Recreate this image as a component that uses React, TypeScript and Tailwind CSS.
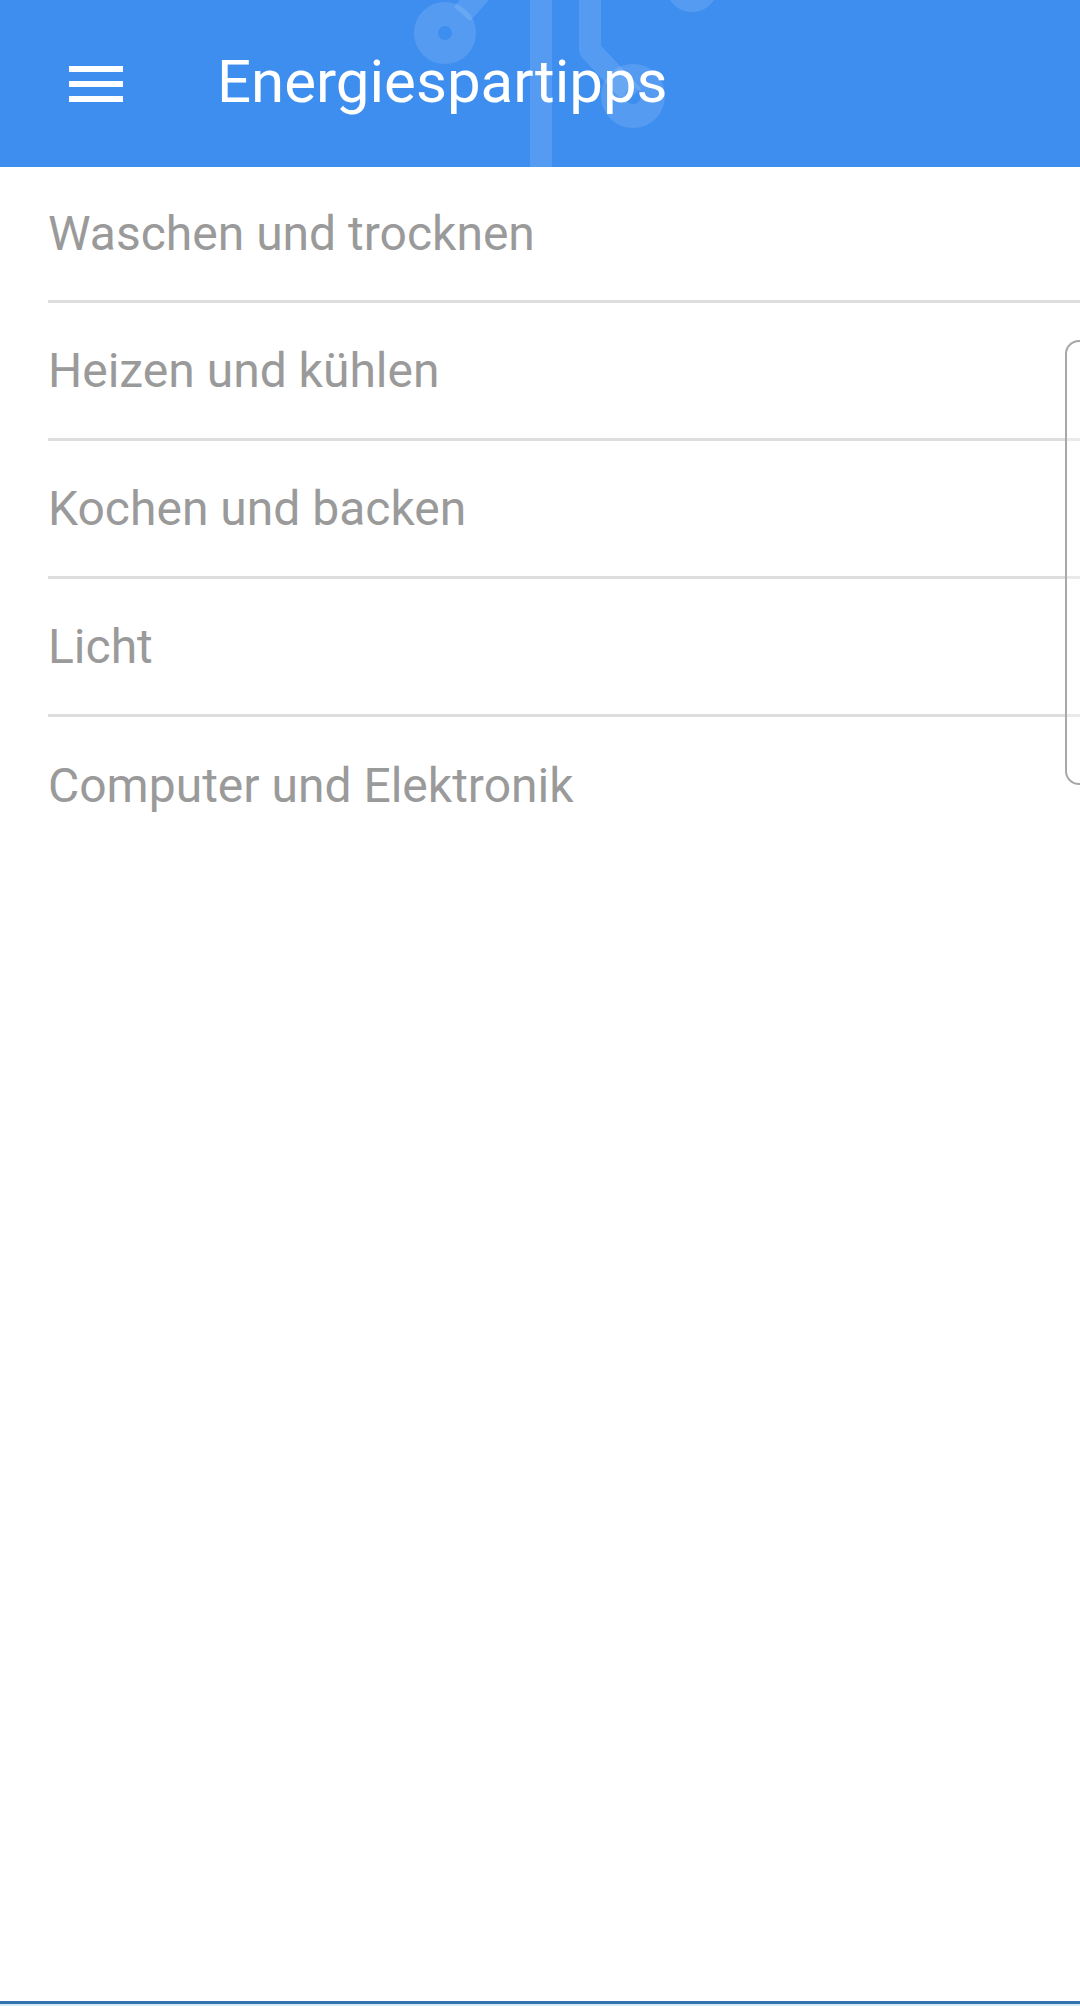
import React from "react";

const items = [
  "Waschen und trocknen",
  "Heizen und kühlen",
  "Kochen und backen",
  "Licht",
  "Computer und Elektronik",
];

export default function App() {
  return (
    <div
      className="relative w-[1080px] h-[2006px] bg-white overflow-hidden flex flex-col"
      style={{ fontFamily: "Roboto, 'Noto Sans', sans-serif" }}
    >
      <header className="relative h-[167px] shrink-0 bg-[#3d8eef] flex items-center overflow-hidden">
        <svg
          className="absolute inset-0"
          width="1080"
          height="167"
          viewBox="0 0 1080 167"
          fill="none"
        >
          <g stroke="#ffffff" strokeOpacity="0.12">
            <line x1="541" y1="0" x2="541" y2="167" strokeWidth="22" />
            <circle cx="445" cy="33" r="19" strokeWidth="24" />
            <line x1="462" y1="14" x2="492" y2="-20" strokeWidth="22" />
            <path d="M590 -10 L590 50 L633 96" strokeWidth="22" strokeLinejoin="round" />
            <circle cx="633" cy="96" r="20" strokeWidth="24" />
            <circle cx="692" cy="-14" r="16" strokeWidth="20" />
          </g>
        </svg>
        <div className="relative ml-[69px] w-[54px] flex flex-col gap-[9px]">
          <div className="h-[6px] bg-white" />
          <div className="h-[6px] bg-white" />
          <div className="h-[6px] bg-white" />
        </div>
        <div className="relative ml-[94px] text-white text-[60px] leading-none -mt-[4px]">
          Energiespartipps
        </div>
      </header>

      <ul className="flex flex-col">
        {items.map((t, i) => (
          <li
            key={t}
            className={`ml-[48px] flex items-center text-[48px] text-[#9a9a9a] ${
              i === 0 ? "h-[136px]" : "h-[138px]"
            } ${i < items.length - 1 ? "border-b-[3px] border-[#dddddd]" : ""}`}
          >
            <span className="leading-none">{t}</span>
          </li>
        ))}
      </ul>

      <div className="absolute left-[1065px] top-[340px] w-[40px] h-[445px] rounded-[14px] border-2 border-[#a8a8a8] bg-white/40" />

      <div className="absolute left-0 right-0 top-[2001px] h-[3px] bg-[#3473b0]" />
      <div className="absolute left-0 right-0 top-[2004px] h-[2px] bg-[#d6eaf5]" />
    </div>
  );
}
